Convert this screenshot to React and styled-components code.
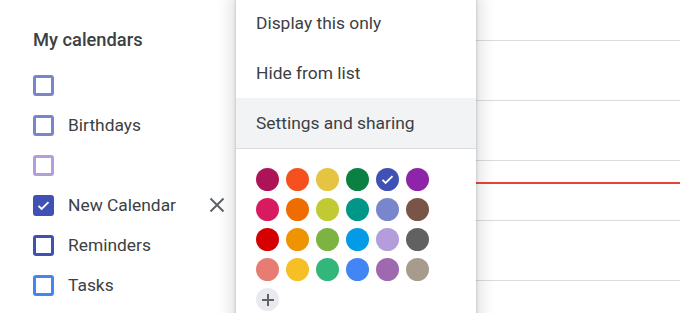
import React from 'react';
import styled, { createGlobalStyle } from 'styled-components';

const GlobalStyle = createGlobalStyle`
    html, body {
        margin: 0;
        padding: 0;
        background: #fff;
        font-family: Roboto, "Liberation Sans", Arial, sans-serif;
        color: #3c4043;
    }
`;

const Page = styled.div`
    position: relative;
    display: flex;
    width: 680px;
    height: 313px;
    overflow: hidden;
    background: #fff;
`;

const Sidebar = styled.div`
    width: 240px;
    flex: none;
    padding: 28px 0 0 33px;
    box-sizing: border-box;
`;

const SectionTitle = styled.div`
    font-size: 18.3px;
    font-weight: 500;
    line-height: 24px;
    color: #3c4043;
    margin: 0 0 13px 0;
`;

const CalendarRow = styled.div`
    display: flex;
    align-items: center;
    height: 40px;
`;

const Checkbox = styled.span`
    width: 21px;
    height: 21px;
    box-sizing: border-box;
    border-radius: 3px;
    border: 3px solid ${(p) => p.color};
    background: ${(p) => (p.checked ? p.color : 'transparent')};
    display: flex;
    align-items: center;
    justify-content: center;
    flex: none;
`;

const CalendarName = styled.span`
    font-size: 17.4px;
    margin-left: 14px;
    color: #3c4043;
    flex: 1;
`;

const RemoveButton = styled.span`
    display: flex;
    width: 16px;
    height: 16px;
    margin-right: 15px;
`;

const Main = styled.div`
    flex: 1;
    padding-top: 40px;
    position: relative;
`;

const HourLine = styled.div`
    height: 60px;
    border-top: 1px solid #dadce0;
    box-sizing: border-box;
`;

const NowLine = styled.div`
    position: absolute;
    left: 0;
    right: 0;
    top: 182px;
    height: 2px;
    background: #ea4335;
`;

const Menu = styled.div`
    position: absolute;
    left: 236px;
    top: -2px;
    width: 240px;
    height: 340px;
    background: #fff;
    box-shadow: 0 2px 14px 5px rgba(60, 64, 67, 0.16),
        0 1px 3px 0 rgba(60, 64, 67, 0.3);
    z-index: 2;
`;

const MenuItem = styled.div`
    height: 50px;
    display: flex;
    align-items: center;
    padding-left: 20px;
    font-size: 17.4px;
    color: #3c4043;
    background: ${(p) => (p.active ? '#f1f3f4' : 'transparent')};
`;

const Divider = styled.div`
    height: 1px;
    background: #dadce0;
`;

const Palette = styled.div`
    display: grid;
    grid-template-columns: repeat(6, 23px);
    grid-auto-rows: 23px;
    column-gap: 7px;
    row-gap: 7px;
    padding: 19px 0 0 20px;
`;

const Swatch = styled.span`
    width: 23px;
    height: 23px;
    border-radius: 50%;
    background: ${(p) => p.color};
    display: flex;
    align-items: center;
    justify-content: center;
`;

const AddSwatch = styled(Swatch)`
    background: #e8eaed;
`;

const colors = [
    '#ad1457', '#f4511e', '#e4c441', '#0b8043', '#3f51b5', '#8e24aa',
    '#d81b60', '#ef6c00', '#c0ca33', '#009688', '#7986cb', '#795548',
    '#d50000', '#f09300', '#7cb342', '#039be5', '#b39ddb', '#616161',
    '#e67c73', '#f6bf26', '#33b679', '#4285f4', '#9e69af', '#a79b8e',
];

const calendars = [
    { name: '', color: '#7986cb' },
    { name: 'Birthdays', color: '#7986cb' },
    { name: '', color: '#b39ddb' },
    { name: 'New Calendar', color: '#3f51b5', checked: true, removable: true },
    { name: 'Reminders', color: '#3f51b5' },
    { name: 'Tasks', color: '#4285f4' },
];

const Check = ({ size = 14 }) => (
    <svg width={size} height={size} viewBox="0 0 24 24">
        <path d="M4 12.5l5 5L20 6.5" fill="none" stroke="#fff" strokeWidth="3" />
    </svg>
);

export default function App() {
    return (
        <Page>
            <GlobalStyle />
            <Sidebar>
                <SectionTitle>My calendars</SectionTitle>
                {calendars.map((c, i) => (
                    <CalendarRow key={i}>
                        <Checkbox color={c.color} checked={c.checked}>
                            {c.checked && <Check size={15} />}
                        </Checkbox>
                        <CalendarName>{c.name}</CalendarName>
                        {c.removable && (
                            <RemoveButton>
                                <svg width="16" height="16" viewBox="0 0 16 16">
                                    <path d="M1.5 1.5l13 13M14.5 1.5l-13 13" stroke="#5f6368" strokeWidth="2" />
                                </svg>
                            </RemoveButton>
                        )}
                    </CalendarRow>
                ))}
            </Sidebar>
            <Main>
                <HourLine />
                <HourLine />
                <HourLine />
                <HourLine />
                <HourLine />
                <NowLine />
            </Main>
            <Menu>
                <MenuItem>Display this only</MenuItem>
                <MenuItem>Hide from list</MenuItem>
                <MenuItem active>Settings and sharing</MenuItem>
                <Divider />
                <Palette>
                    {colors.map((c) => (
                        <Swatch key={c} color={c}>
                            {c === '#3f51b5' && <Check size={15} />}
                        </Swatch>
                    ))}
                    <AddSwatch>
                        <svg width="12" height="12" viewBox="0 0 12 12">
                            <path d="M6 0v12M0 6h12" stroke="#5f6368" strokeWidth="2" />
                        </svg>
                    </AddSwatch>
                </Palette>
            </Menu>
        </Page>
    );
}
